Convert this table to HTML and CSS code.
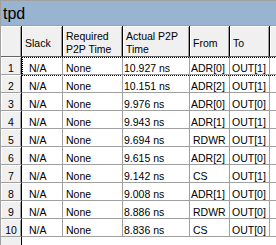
FILE: index.html
```html
<!DOCTYPE html>
<html>
<head>
<meta charset="utf-8">
<link rel="stylesheet" href="styles.css">
</head>
<body>
<div class="table">
  <div class="title">tpd</div>
  <div class="row head">
    <div class="hc"></div>
    <div class="hc">Slack</div>
    <div class="hc">Required<br>P2P Time</div>
    <div class="hc">Actual P2P<br>Time</div>
    <div class="hc">From</div>
    <div class="hc">To</div>
    <div class="hc last"></div>
  </div>
  <div class="row data focus">
    <div class="c num">1</div><div class="c slack">N/A</div><div class="c req">None</div><div class="c act">10.927 ns</div><div class="c from tight">ADR[0]</div><div class="c to">OUT[1]</div><div class="c"></div>
  </div>
  <div class="row data">
    <div class="c num">2</div><div class="c slack">N/A</div><div class="c req">None</div><div class="c act">10.151 ns</div><div class="c from tight">ADR[2]</div><div class="c to">OUT[1]</div><div class="c"></div>
  </div>
  <div class="row data">
    <div class="c num">3</div><div class="c slack">N/A</div><div class="c req">None</div><div class="c act">9.976 ns</div><div class="c from tight">ADR[0]</div><div class="c to">OUT[0]</div><div class="c"></div>
  </div>
  <div class="row data">
    <div class="c num">4</div><div class="c slack">N/A</div><div class="c req">None</div><div class="c act">9.943 ns</div><div class="c from tight">ADR[1]</div><div class="c to">OUT[1]</div><div class="c"></div>
  </div>
  <div class="row data">
    <div class="c num">5</div><div class="c slack">N/A</div><div class="c req">None</div><div class="c act">9.694 ns</div><div class="c from">RDWR</div><div class="c to">OUT[1]</div><div class="c"></div>
  </div>
  <div class="row data">
    <div class="c num">6</div><div class="c slack">N/A</div><div class="c req">None</div><div class="c act">9.615 ns</div><div class="c from tight">ADR[2]</div><div class="c to">OUT[0]</div><div class="c"></div>
  </div>
  <div class="row data">
    <div class="c num">7</div><div class="c slack">N/A</div><div class="c req">None</div><div class="c act">9.142 ns</div><div class="c from">CS</div><div class="c to">OUT[1]</div><div class="c"></div>
  </div>
  <div class="row data">
    <div class="c num">8</div><div class="c slack">N/A</div><div class="c req">None</div><div class="c act">9.008 ns</div><div class="c from tight">ADR[1]</div><div class="c to">OUT[0]</div><div class="c"></div>
  </div>
  <div class="row data">
    <div class="c num">9</div><div class="c slack">N/A</div><div class="c req">None</div><div class="c act">8.886 ns</div><div class="c from">RDWR</div><div class="c to">OUT[0]</div><div class="c"></div>
  </div>
  <div class="row data">
    <div class="c num">10</div><div class="c slack">N/A</div><div class="c req">None</div><div class="c act">8.836 ns</div><div class="c from">CS</div><div class="c to">OUT[0]</div><div class="c"></div>
  </div>
  <div class="rest">
    <div class="rest-num"></div>
    <div></div>
  </div>
</div>
</body>
</html>
```
FILE: styles.css
```css
html, body {
  margin: 0;
  padding: 0;
  background: #fff;
}
body {
  font-family: "Liberation Sans", Arial, sans-serif;
  font-size: 10.5px;
  color: #000;
}
.table {
  width: 276px;
  height: 245px;
  box-sizing: border-box;
  border-left: 1px solid #a0a0a0;
  border-top: 1px solid #a0a0a0;
  display: flex;
  flex-direction: column;
  overflow: hidden;
}
.title {
  flex: none;
  height: 23px;
  padding: 1px 0 0 2px;
  background: #99b4d1;
  border-bottom: 1px solid #a0a0a0;
  font-size: 16px;
  line-height: 24px;
}
.row {
  flex: none;
  display: grid;
  grid-template-columns: 21px 41px 60px 67px 40px 40px 1fr;
  position: relative;
}
.head {
  height: 31px;
}
.hc {
  box-sizing: border-box;
  background: #f0f0f0;
  border-right: 1px solid #000;
  border-bottom: 1px solid #646464;
  box-shadow: inset 1px 1px 0 #fff, inset -1px 0 0 #a0a0a0;
  display: flex;
  align-items: center;
  padding: 4px 0 0 3px;
  line-height: 13px;
  white-space: nowrap;
  overflow: hidden;
}
.hc.last {
  border-right: none;
  box-shadow: inset 1px 1px 0 #fff;
}
.data {
  height: 18px;
}
.c {
  box-sizing: border-box;
  border-right: 1px solid #a0a0a0;
  border-bottom: 1px solid #a0a0a0;
  padding-top: 5px;
  line-height: 12px;
  white-space: nowrap;
  overflow: hidden;
}
.c:last-child {
  border-right: none;
}
.num {
  background: #f0f0f0;
  border-right: 1px solid #000;
  box-shadow: inset 1px 1px 0 #fff, inset -1px 0 0 #a0a0a0;
  text-align: center;
}
.slack { padding-left: 7px; }
.req { padding-left: 3px; }
.act { padding-left: 1px; }
.from { padding-left: 3px; }
.from.tight { padding-left: 1px; }
.to { padding-left: 2px; }
.focus::after {
  content: "";
  position: absolute;
  left: 21px;
  right: -1px;
  top: 0;
  bottom: -1px;
  border: 1px dotted #000;
  pointer-events: none;
}
.rest {
  flex: 1;
  display: grid;
  grid-template-columns: 21px 1fr;
}
.rest-num {
  background: #f0f0f0;
  border-right: 1px solid #000;
}
```
